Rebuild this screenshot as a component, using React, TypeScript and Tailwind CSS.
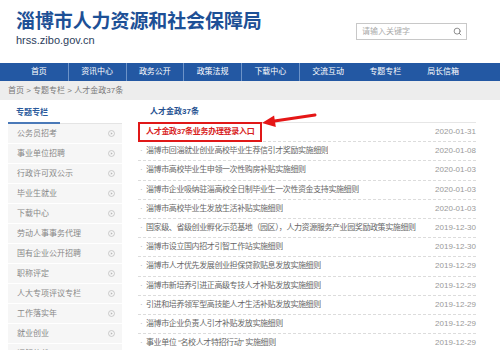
import { Search } from 'lucide-react';

const navItems = ['首页', '资讯中心', '政务公开', '政策法规', '下载中心', '交流互动', '专题专栏', '局长信箱'];

const sideItems = [
  '公务员招考',
  '事业单位招聘',
  '行政许可双公示',
  '毕业生就业',
  '下载中心',
  '劳动人事事务代理',
  '国有企业公开招聘',
  '职称评定',
  '人大专项评议专栏',
  '工作落实年',
  '就业创业',
  '调解仲裁',
];

const articles = [
  { title: '淄博市回淄就业创业高校毕业生荐信引才奖励实施细则', date: '2020-01-08' },
  { title: '淄博市高校毕业生申领一次性购房补贴实施细则', date: '2020-01-03' },
  { title: '淄博市企业吸纳驻淄高校全日制毕业生一次性资金支持实施细则', date: '2020-01-03' },
  { title: '淄博市高校毕业生发放生活补贴实施细则', date: '2020-01-03' },
  { title: '国家级、省级创业孵化示范基地（园区），人力资源服务产业园奖励政策实施细则', date: '2019-12-30' },
  { title: '淄博市设立国内招才引智工作站实施细则', date: '2019-12-30' },
  { title: '淄博市人才优先发展创业担保贷款贴息发放实施细则', date: '2019-12-29' },
  { title: '淄博市新培养引进正高级专技人才补贴发放实施细则', date: '2019-12-29' },
  { title: '引进和培养领军型高技能人才生活补贴发放实施细则', date: '2019-12-29' },
  { title: '淄博市企业负责人引才补贴发放实施细则', date: '2019-12-29' },
  { title: '事业单位 “名校人才特招行动” 实施细则', date: '2019-12-29' },
];

// little circled play icon next to each sidebar link
const PlayDot = () => (
  <svg width="7" height="7" viewBox="0 0 8 8" className="shrink-0">
    <circle cx="4" cy="4" r="3.4" fill="none" stroke="#b8b8b8" strokeWidth="0.8" />
    <path d="M3.2 2.5 L5.4 4 L3.2 5.5 Z" fill="#b8b8b8" />
  </svg>
);

export default function App() {
  return (
    <div className="relative w-[500px] h-[350px] overflow-hidden bg-white font-['Liberation_Sans','Noto_Sans_CJK_SC',sans-serif]">
      {/* header */}
      <div className="h-[63px] flex items-start justify-between pl-4 pr-[33px]">
        <div className="pt-[11px]">
          <div className="text-[19px] leading-[22px] font-bold text-[#1d5096] tracking-[-0.1px]">淄博市人力资源和社会保障局</div>
          <div className="text-[11px] leading-[12px] text-[#2c3e5c] mt-[1px]">hrss.zibo.gov.cn</div>
        </div>
        <div className="mt-[23px] w-[111px] h-[17px] border border-[#c8c8c8] flex items-center justify-between pl-[5px] pr-[4px]">
          <span className="text-[8px] text-[#aaa]">请输入关键字</span>
          <Search size={9} strokeWidth={2.2} color="#777" />
        </div>
      </div>

      {/* nav */}
      <div className="h-[18px] bg-[#2358a3] flex pl-[10px]">
        {navItems.map((n, i) => (
          <div
            key={n}
            className={`w-[57.75px] flex items-center justify-center text-[8px] text-white ${i > 0 && i < 6 ? 'border-l border-[#6d93c8]' : ''}`}
          >
            {n}
          </div>
        ))}
      </div>

      {/* breadcrumb */}
      <div className="h-[19px] bg-[#ededed] flex items-center pl-[8px] text-[8px] text-[#777]">
        首页 &gt; 专题专栏 &gt; 人才金政37条
      </div>

      <div className="flex pl-[8px] pt-[2px]">
        {/* sidebar */}
        <div className="w-[114px] shrink-0">
          <div className="h-[22px] flex items-center pl-[8px] text-[8px] font-bold text-[#2a5a9c] border-b border-[#e4e4e4] relative">
            专题专栏
            <div className="absolute left-0 bottom-[-1px] w-[52px] h-[2px] bg-[#4a79b8]" />
          </div>
          <div className="bg-[#f6f6f6]">
            {sideItems.map((s) => (
              <div key={s} className="h-5 flex items-center justify-between pl-[9px] pr-[7px] border-b border-white text-[8px] text-[#888]">
                <span>{s}</span>
                <PlayDot />
              </div>
            ))}
          </div>
        </div>

        {/* article list */}
        <div className="w-[338px] ml-[16px]">
          <div className="h-[21px] flex items-center pl-[12px] text-[8px] font-bold text-[#234f8f] border-b border-[#e6e6e6]">
            人才金政37条
          </div>
          <div className="h-[19.2px] flex items-center justify-between border-b border-dashed border-[#dcdcdc]">
            <div className="h-[20px] -mt-[1px] border-2 border-[#e01818] flex items-center pl-[6px] pr-[4px] w-[124px]">
              <span className="text-[8px] font-bold text-[#d81e1e] whitespace-nowrap tracking-[-0.3px]">人才金政37条业务办理登录入口</span>
            </div>
            <span className="text-[8px] text-[#999]">2020-01-31</span>
          </div>
          {articles.map((a, i) => (
            <div key={i} className="h-[19.2px] flex items-center justify-between border-b border-dashed border-[#dcdcdc] text-[8px]">
              <div className="flex items-center overflow-hidden whitespace-nowrap text-[#666] tracking-[-0.4px]">
                <span className="w-[8px] pl-[2px] text-[#aaa] shrink-0">·</span>
                <span className="overflow-hidden">{a.title}</span>
              </div>
              <span className="text-[#999] shrink-0 pl-2">{a.date}</span>
            </div>
          ))}
        </div>
      </div>

      {/* red arrow pointing to the login entry */}
      <svg className="absolute left-[258px] top-[108px]" width="64" height="24" viewBox="0 0 64 24">
        <line x1="16.5" y1="13" x2="57" y2="7" stroke="#e51616" strokeWidth="3" strokeLinecap="round" />
        <polygon points="4,15 17.8,19 16.1,7.6" fill="#e51616" />
      </svg>
    </div>
  );
}
